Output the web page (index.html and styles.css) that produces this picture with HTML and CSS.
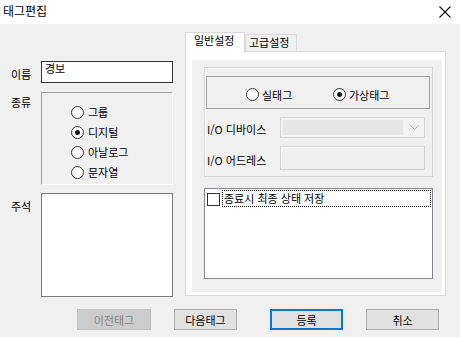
FILE: index.html
```html
<!DOCTYPE html>
<html lang="ko">
<head>
<meta charset="utf-8">
<title>태그편집</title>
<link rel="stylesheet" href="styles.css">
</head>
<body>
<div class="titlebar">
  <span class="title">태그편집</span>
  <svg class="close" viewBox="0 0 12 12" width="12" height="12"><path d="M0.5 0.5 L11.5 11.5 M11.5 0.5 L0.5 11.5" stroke="#111" stroke-width="1.1" fill="none"/></svg>
</div>
<div class="client">
  <div class="main">
    <div class="left">
      <div class="row row-name">
        <span class="lbl">이름</span>
        <div class="edit-name">경보</div>
      </div>
      <div class="row row-kind">
        <span class="lbl">종류</span>
        <div class="frame">
          <div class="radio"><span class="dot"></span><span class="rtext">그룹</span></div>
          <div class="radio"><span class="dot checked"></span><span class="rtext">디지털</span></div>
          <div class="radio"><span class="dot"></span><span class="rtext">아날로그</span></div>
          <div class="radio"><span class="dot"></span><span class="rtext">문자열</span></div>
        </div>
      </div>
      <div class="row row-memo">
        <span class="lbl">주석</span>
        <div class="memo"></div>
      </div>
    </div>
    <div class="tabs">
      <div class="tabstrip">
        <div class="tab tab-active">일반설정</div>
        <div class="tab tab-idle">고급설정</div>
      </div>
      <div class="panel">
        <div class="page">
          <div class="group">
            <div class="radiobox">
              <div class="radio radio-real"><span class="dot"></span><span class="rtext2">실태그</span></div>
              <div class="radio"><span class="dot checked"></span><span class="rtext2">가상태그</span></div>
            </div>
            <div class="io-row io-device">
              <span class="io-lbl">I/O 디바이스</span>
              <div class="combo">
                <div class="combo-field"></div>
                <svg class="chev" viewBox="0 0 9 5" width="9" height="5"><path d="M0.5 0.5 L4.5 4.5 L8.5 0.5" stroke="#a8a8a8" stroke-width="1" fill="none"/></svg>
              </div>
            </div>
            <div class="io-row io-addr">
              <span class="io-lbl">I/O 어드레스</span>
              <div class="addr"></div>
            </div>
          </div>
          <div class="listbox">
            <div class="item">
              <span class="check"></span>
              <span class="focus">종료시 최종 상태 저장</span>
            </div>
          </div>
        </div>
      </div>
    </div>
  </div>
  <div class="buttons">
    <div class="btn btn-disabled btn-prev">이전태그</div>
    <div class="btn btn-next">다음태그</div>
    <div class="btn btn-default btn-ok">등록</div>
    <div class="btn btn-cancel">취소</div>
  </div>
</div>
</body>
</html>
```

FILE: styles.css
```css
* { box-sizing: border-box; }
html, body { margin: 0; padding: 0; }
body {
  width: 460px;
  height: 337px;
  overflow: hidden;
  background: #f0f0f0;
  font-family: "Noto Sans CJK KR", "Noto Sans", sans-serif;
  font-size: 11px;
  line-height: 14px;
  color: #000;
}

.titlebar {
  height: 24px;
  background: #fff;
  display: flex;
  align-items: center;
  justify-content: space-between;
  padding: 0 9px 2px 3px;
}
.title { font-size: 12px; line-height: 16px; }
.close { display: block; margin-top: 1px; }

.client { height: 313px; display: flex; flex-direction: column; }
.main { display: flex; padding: 8px 0 0 11px; }

.left { width: 162px; margin-top: 29px; display: flex; flex-direction: column; }
.row { display: flex; }
.lbl { width: 30px; flex: none; }
.row-name .lbl { padding-top: 6px; }
.edit-name {
  width: 132px;
  height: 22px;
  border: 1px solid #333;
  background: #fff;
  padding: 0 3px;
  line-height: 13px;
}
.row-kind { margin-top: 9px; }
.row-kind .lbl { padding-top: 3px; }
.frame {
  width: 132px;
  height: 93px;
  border-top: 1px solid #a0a0a0;
  border-left: 1px solid #a0a0a0;
  border-right: 1px solid #fff;
  border-bottom: 1px solid #fff;
  padding: 9px 0 0 29px;
}
.radio { display: flex; align-items: center; height: 20px; }
.dot {
  width: 13px;
  height: 13px;
  border: 1px solid #333;
  border-radius: 50%;
  background: #fff;
  flex: none;
  display: flex;
  align-items: center;
  justify-content: center;
}
.dot.checked::after {
  content: "";
  width: 5px;
  height: 5px;
  border-radius: 50%;
  background: #1a1a1a;
}
.rtext { margin-left: 4px; }
.rtext2 { margin-left: 3px; }

.row-memo { margin-top: 8px; }
.row-memo .lbl { padding-top: 6px; }
.memo {
  width: 132px;
  height: 104px;
  border: 1px solid #7a7a7a;
  background: #fff;
}

.tabs { margin-left: 12px; width: 261px; }
.tabstrip { display: flex; align-items: flex-end; height: 19px; }
.tab {
  border: 1px solid #d9d9d9;
  border-bottom: none;
  white-space: nowrap;
}
.tab-active {
  position: relative;
  z-index: 1;
  width: 60px;
  height: 20px;
  margin-bottom: -1px;
  background: #fff;
  padding-left: 8px;
}
.tab-idle {
  width: 52px;
  height: 17px;
  background: #f0f0f0;
  padding-left: 3px;
}
.panel {
  height: 245px;
  border: 1px solid #d9d9d9;
  background: #fff;
  padding: 8px 3px 3px 6px;
}
.page {
  height: 100%;
  background: #f0f0f0;
  padding: 7px 0 0 12px;
}
.group {
  width: 229px;
  height: 110px;
  border: 1px solid #d5d5d5;
  box-shadow: inset 1px 1px 0 #fff;
  padding: 8px 0 0 1px;
}
.radiobox {
  width: 224px;
  height: 33px;
  border: 1px solid #a0a0a0;
  display: flex;
  align-items: center;
  padding: 4px 0 0 39px;
}
.radio-real { width: 87px; }

.io-row { display: flex; align-items: center; padding-left: 1px; }
.io-lbl { width: 73px; flex: none; padding-top: 3px; }
.io-device { margin-top: 8px; height: 21px; }
.io-addr { margin-top: 8px; height: 24px; }
.combo {
  width: 145px;
  height: 21px;
  border: 1px solid #d4d4d4;
  background: #f3f3f3;
  display: flex;
  align-items: center;
  padding: 0 5px 0 2px;
}
.combo-field { width: 121px; height: 15px; background: #e6e6e6; }
.chev { display: block; margin-left: 7px; }
.addr {
  width: 145px;
  height: 24px;
  border: 1px solid #cfcfcf;
  box-shadow: inset 1px 1px 0 #fff;
  background: #efefef;
}

.listbox {
  width: 229px;
  height: 91px;
  margin-top: 11px;
  border: 1px solid #828790;
  background: #fff;
  padding: 1px 0 0 2px;
}
.item { display: flex; align-items: center; height: 17px; }
.check {
  width: 13px;
  height: 13px;
  border: 1px solid #333;
  background: #fff;
  flex: none;
  margin-top: 2px;
}
.focus {
  margin-left: 2px;
  width: 209px;
  height: 17px;
  border: 1px dotted #000;
  padding-left: 1px;
  line-height: 14px;
  white-space: nowrap;
}

.buttons { display: flex; margin-top: 12px; padding-left: 77px; }
.btn {
  height: 21px;
  border: 1px solid #adadad;
  background: #e1e1e1;
  display: flex;
  align-items: center;
  justify-content: center;
  white-space: nowrap;
}
.btn-disabled { background: #cccccc; border-color: #bfbfbf; color: #838383; }
.btn-default { border: 2px solid #0078d7; }
.btn-prev { width: 74px; }
.btn-next { width: 63px; margin-left: 23px; }
.btn-ok { width: 73px; margin-left: 33px; }
.btn-cancel { width: 73px; margin-left: 23px; }
```
